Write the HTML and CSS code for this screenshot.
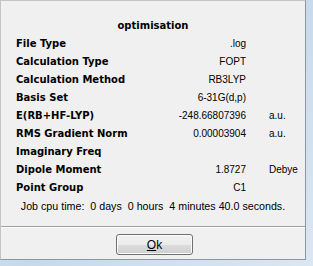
FILE: index.html
```html
<!DOCTYPE html>
<html lang="en">
<head>
    <meta charset="UTF-8">
    <title>optimisation</title>
    <link rel="stylesheet" href="styles.css">
</head>
<body>
    <div class="dialog">
        <div class="title">optimisation</div>
        <div class="summary">
            <div class="label">File Type</div><div class="value">.log</div><div class="unit"></div>
            <div class="label">Calculation Type</div><div class="value">FOPT</div><div class="unit"></div>
            <div class="label">Calculation Method</div><div class="value">RB3LYP</div><div class="unit"></div>
            <div class="label">Basis Set</div><div class="value">6-31G(d,p)</div><div class="unit"></div>
            <div class="label">E(RB+HF-LYP)</div><div class="value">-248.66807396</div><div class="unit">a.u.</div>
            <div class="label">RMS Gradient Norm</div><div class="value">0.00003904</div><div class="unit">a.u.</div>
            <div class="label">Imaginary Freq</div><div class="value"></div><div class="unit"></div>
            <div class="label">Dipole Moment</div><div class="value">1.8727</div><div class="unit">Debye</div>
            <div class="label">Point Group</div><div class="value">C1</div><div class="unit"></div>
        </div>
        <div class="cputime">Job cpu time:&nbsp; 0 days&nbsp; 0 hours&nbsp; 4 minutes 40.0 seconds.</div>
        <div class="separator"></div>
        <div class="actions">
            <button type="button" class="btn"><u>O</u>k</button>
        </div>
    </div>
</body>
</html>
```
FILE: styles.css
```css
body { margin: 0; width: 313px; height: 266px; background: linear-gradient(135deg, #e4edf6 0%, #c6d9eb 50%, #dbe7f2 100%); overflow: hidden; }
.dialog { width: 304px; height: 258px; background: #f0f0f0; border-left: 1px solid #c4c4c4; border-top: 1px solid #c4c4c4; border-right: 1px solid #8a96a2; border-bottom: 1px solid #8a96a2; font-family: "Liberation Sans Narrow", "Liberation Sans", sans-serif; font-size: 10px; color: #000; }
.title { padding-top: 16px; line-height: 18px; text-align: center; font-family: "DejaVu Sans", sans-serif; font-weight: bold; font-size: 10px; }
.summary { display: grid; grid-template-columns: 114px 93px auto; column-gap: 23px; padding-left: 15px; line-height: 18px; }
.label { font-family: "DejaVu Sans", sans-serif; font-weight: bold; }
.value { text-align: right; }
.cputime { line-height: 18px; text-align: center; font-size: 10.7px; }
.separator { margin: 11px 0 0 0; border-top: 1px solid #a0a0a0; border-bottom: 1px solid #ffffff; }
.actions { display: flex; justify-content: center; padding-top: 6px; padding-left: 3px; }
.btn { width: 77px; height: 21px; border: 1px solid #707070; border-radius: 3px; background: linear-gradient(#f2f2f2 0%, #ebebeb 50%, #dddddd 50%, #cfcfcf 100%); box-shadow: inset 0 0 0 1px #fcfcfc; font-family: "Liberation Sans Narrow", "Liberation Sans", sans-serif; font-size: 12px; color: #000; padding: 0; }
```
